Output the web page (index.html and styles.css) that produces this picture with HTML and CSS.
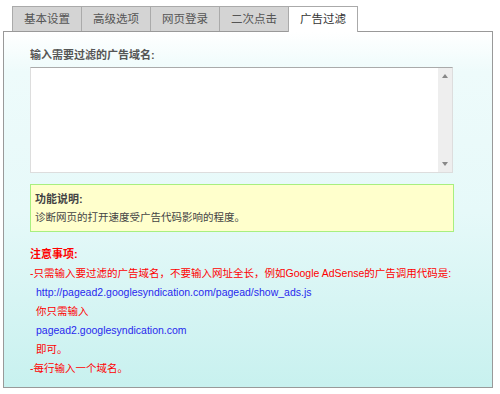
FILE: index.html
```html
<!DOCTYPE html>
<html>

<head>
    <meta charset="UTF-8">
    <meta name="viewport" content="width=device-width, initial-scale=1.0">
    <title>广告过滤</title>
    <link rel="stylesheet" href="styles.css">
</head>

<body>
    <div class="wrap">
        <div class="tabs">
            <div class="tab">基本设置</div>
            <div class="tab">高级选项</div>
            <div class="tab">网页登录</div>
            <div class="tab">二次点击</div>
            <div class="tab active">广告过滤</div>
        </div>
        <div class="panel">
            <div class="label">输入需要过滤的广告域名:</div>
            <div class="textbox">
                <textarea class="input"></textarea>
                <div class="scrollbar">
                    <span class="arrow up"></span>
                    <span class="arrow down"></span>
                </div>
            </div>
            <div class="info">
                <div class="info-title">功能说明:</div>
                <div class="info-text">诊断网页的打开速度受广告代码影响的程度。</div>
            </div>
            <div class="notes">
                <div class="notes-title">注意事项:</div>
                <div>-只需输入要过滤的广告域名，不要输入网址全长，例如Google AdSense的广告调用代码是:</div>
                <div class="indent link">http://pagead2.googlesyndication.com/pagead/show_ads.js</div>
                <div class="indent">你只需输入</div>
                <div class="indent link">pagead2.googlesyndication.com</div>
                <div class="indent">即可。</div>
                <div>-每行输入一个域名。</div>
            </div>
        </div>
    </div>
</body>

</html>
```

FILE: styles.css
```css
body {
    margin: 0;
    font-family: "Liberation Sans", "Noto Sans CJK SC", sans-serif;
    font-size: 10.5px;
    background-color: white;
}

.wrap {
    padding: 6px 7px 0 3px;
}

.tabs {
    display: flex;
    padding-left: 9px;
}

.tab {
    width: 68px;
    height: 24px;
    line-height: 24px;
    text-align: center;
    border: 1px solid #aaa;
    border-bottom: none;
    margin-right: -1px;
    background-color: #d4d4d4;
    color: #555;
    font-size: 11.5px;
}

.tab.active {
    background-color: white;
    height: 25px;
    margin-bottom: -1px;
    position: relative;
    color: #333;
}

.panel {
    border: 1px solid #999;
    padding: 14px 0 0 26px;
    box-sizing: border-box;
    height: 357px;
    background: linear-gradient(to bottom, #ffffff 0px, #eefbfb 40px, #e6f9f9 180px, #c8f1ef 100%);
}

.label {
    font-weight: bold;
    font-size: 11px;
    color: #555;
    line-height: 19px;
    margin-bottom: 2px;
}

.textbox {
    display: flex;
    width: 423px;
    height: 106px;
    box-sizing: border-box;
    border: 1px solid #ddd;
    border-top-color: #aaa;
    background-color: white;
}

.input {
    flex: 1;
    border: none;
    outline: none;
    resize: none;
    margin: 0;
    padding: 2px;
}

.scrollbar {
    width: 14px;
    background-color: #eeeeee;
    display: flex;
    flex-direction: column;
    justify-content: space-between;
    align-items: center;
    padding: 6px 0;
}

.arrow {
    width: 0;
    height: 0;
    border-left: 3px solid transparent;
    border-right: 3px solid transparent;
}

.arrow.up {
    border-bottom: 4px solid #888;
}

.arrow.down {
    border-top: 4px solid #888;
}

.info {
    width: 424px;
    box-sizing: border-box;
    margin-top: 11px;
    padding: 5px 4px 5px;
    background-color: #ffffcc;
    border: 1px solid #a8ef7f;
    line-height: 18px;
    color: #444;
}

.info-title {
    font-weight: bold;
    font-size: 11px;
}

.notes {
    margin-top: 13px;
    color: #ff0000;
    line-height: 19px;
}

.notes-title {
    font-weight: bold;
    font-size: 11px;
}

.indent {
    padding-left: 6px;
}

.link {
    color: #2828ee;
}
```
